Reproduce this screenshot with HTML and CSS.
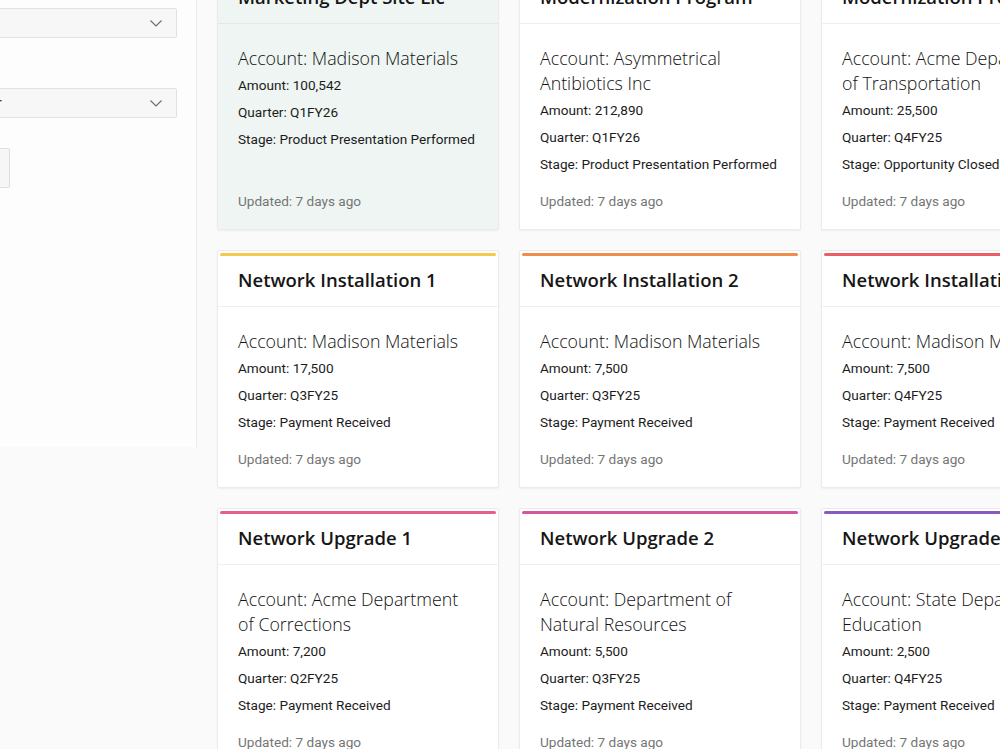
FILE: index.html
```html
<!DOCTYPE html>
<html lang="en">
<head>
  <meta charset="UTF-8" />
  <meta name="viewport" content="width=device-width, initial-scale=1.0"/>
  <title>Opportunities</title>
  <link rel="stylesheet" href="styles.css">
</head>
<body>
<div class="app">
  <div class="sidebar">
    <div class="field">
      <label>Stage</label>
      <div class="select"><span>All Stages</span>
        <svg width="12" height="7" viewBox="0 0 12 7"><path d="M0.5 0.5 L6 6 L11.5 0.5" fill="none" stroke="#6b6b6b" stroke-width="1.1"/></svg>
      </div>
    </div>
    <div class="field">
      <label>Quarter</label>
      <div class="select"><span>Any Quarter</span>
        <svg width="12" height="7" viewBox="0 0 12 7"><path d="M0.5 0.5 L6 6 L11.5 0.5" fill="none" stroke="#6b6b6b" stroke-width="1.1"/></svg>
      </div>
    </div>
    <button class="btn">Apply</button>
  </div>

  <div class="main">
    <div class="cards">
      <div class="card selected">
        <div class="card-head"><div class="bar"></div><h3>Marketing Dept Site Lic</h3></div>
        <div class="card-body">
          <div class="account">Account: Madison Materials</div>
          <div class="line">Amount: 100,542</div>
          <div class="line">Quarter: Q1FY26</div>
          <div class="line">Stage: Product Presentation Performed</div>
          <div class="updated">Updated: 7 days ago</div>
        </div>
      </div>
      <div class="card">
        <div class="card-head"><div class="bar"></div><h3>Modernization Program</h3></div>
        <div class="card-body">
          <div class="account">Account: Asymmetrical Antibiotics Inc</div>
          <div class="line">Amount: 212,890</div>
          <div class="line">Quarter: Q1FY26</div>
          <div class="line">Stage: Product Presentation Performed</div>
          <div class="updated">Updated: 7 days ago</div>
        </div>
      </div>
      <div class="card">
        <div class="card-head"><div class="bar"></div><h3>Modernization Program 2</h3></div>
        <div class="card-body">
          <div class="account">Account: Acme Department of Transportation</div>
          <div class="line">Amount: 25,500</div>
          <div class="line">Quarter: Q4FY25</div>
          <div class="line">Stage: Opportunity Closed Won</div>
          <div class="updated">Updated: 7 days ago</div>
        </div>
      </div>

      <div class="card">
        <div class="card-head"><div class="bar yellow"></div><h3>Network Installation 1</h3></div>
        <div class="card-body">
          <div class="account">Account: Madison Materials</div>
          <div class="line">Amount: 17,500</div>
          <div class="line">Quarter: Q3FY25</div>
          <div class="line">Stage: Payment Received</div>
          <div class="updated">Updated: 7 days ago</div>
        </div>
      </div>
      <div class="card">
        <div class="card-head"><div class="bar orange"></div><h3>Network Installation 2</h3></div>
        <div class="card-body">
          <div class="account">Account: Madison Materials</div>
          <div class="line">Amount: 7,500</div>
          <div class="line">Quarter: Q3FY25</div>
          <div class="line">Stage: Payment Received</div>
          <div class="updated">Updated: 7 days ago</div>
        </div>
      </div>
      <div class="card">
        <div class="card-head"><div class="bar red"></div><h3>Network Installation 3</h3></div>
        <div class="card-body">
          <div class="account">Account: Madison Materials</div>
          <div class="line">Amount: 7,500</div>
          <div class="line">Quarter: Q4FY25</div>
          <div class="line">Stage: Payment Received</div>
          <div class="updated">Updated: 7 days ago</div>
        </div>
      </div>

      <div class="card">
        <div class="card-head"><div class="bar rose"></div><h3>Network Upgrade 1</h3></div>
        <div class="card-body">
          <div class="account">Account: Acme Department of Corrections</div>
          <div class="line">Amount: 7,200</div>
          <div class="line">Quarter: Q2FY25</div>
          <div class="line">Stage: Payment Received</div>
          <div class="updated">Updated: 7 days ago</div>
        </div>
      </div>
      <div class="card">
        <div class="card-head"><div class="bar pink"></div><h3>Network Upgrade 2</h3></div>
        <div class="card-body">
          <div class="account">Account: Department of Natural Resources</div>
          <div class="line">Amount: 5,500</div>
          <div class="line">Quarter: Q3FY25</div>
          <div class="line">Stage: Payment Received</div>
          <div class="updated">Updated: 7 days ago</div>
        </div>
      </div>
      <div class="card">
        <div class="card-head"><div class="bar purple"></div><h3>Network Upgrade 3</h3></div>
        <div class="card-body">
          <div class="account">Account: State Department of Education</div>
          <div class="line">Amount: 2,500</div>
          <div class="line">Quarter: Q4FY25</div>
          <div class="line">Stage: Payment Received</div>
          <div class="updated">Updated: 7 days ago</div>
        </div>
      </div>
    </div>
  </div>
</div>
</body>
</html>
```

FILE: styles.css
```css
html, body { margin: 0; overflow: hidden; }
body { font-family: 'Open Sans', 'Noto Sans', sans-serif; background: #fafafa; color: #1f1f1f; }
.app { display: flex; align-items: flex-start; width: 1400px; margin: -53px 0 0 -105px; }

.sidebar { width: 302px; height: 500px; box-sizing: border-box; padding: 35px 19px 0 20px; background: #fdfdfd; border-right: 1px solid #ebebeb; flex-shrink: 0; }
.field { margin-bottom: 24px; }
.field label { display: block; font-size: 14px; line-height: 20px; margin-bottom: 6px; color: #333; }
.select { display: flex; align-items: center; justify-content: space-between; height: 30px; box-sizing: border-box; padding: 0 14px 0 12px; background: #f7f7f7; border: 1px solid #e1e1e1; border-radius: 2px; font-family: Roboto, sans-serif; font-size: 14px; color: #333; }
.btn { display: block; margin-top: 30px; width: 95px; height: 40px; background: #f6f6f6; border: 1px solid #dedede; border-radius: 2px; font-family: inherit; font-size: 14px; color: #333; }

.main { flex: 1; padding: 20px; }
.cards { display: grid; grid-template-columns: repeat(3, 282px); gap: 20px; }
.card { display: flex; flex-direction: column; background: #fff; border: 1px solid #ebebeb; border-radius: 2px; box-shadow: 0 1px 2px rgba(0,0,0,0.05); }
.card.selected { background: #eef5f2; }
.card-head { border-bottom: 1px solid #efefef; }
.card.selected .card-head { border-bottom-color: #e2eae7; }
.bar { height: 3px; margin: 2px 2px 0; border-radius: 2px; }
.bar.yellow { background: #f6c94e; }
.bar.orange { background: #f08c4c; }
.bar.red { background: #eb5f66; }
.bar.rose { background: #e8608a; }
.bar.pink { background: #d655a0; }
.bar.purple { background: #8a58c2; }
.card h3 { margin: 0; padding: 11px 21px 13px 20px; font-size: 18.5px; line-height: 26px; font-weight: 600; color: #161616; white-space: nowrap; }
.card-body { flex: 1; display: flex; flex-direction: column; padding: 22px 21px 14px 20px; }
.account { margin-bottom: 1px; font-size: 17.8px; line-height: 25px; font-weight: 300; color: #111; }
.line { font-family: Roboto, sans-serif; font-size: 13.6px; line-height: 27px; color: #1c1c1c; }
.updated { margin-top: auto; padding-top: 10px; font-family: Roboto, sans-serif; font-size: 13.6px; line-height: 27px; color: #757575; }
```
